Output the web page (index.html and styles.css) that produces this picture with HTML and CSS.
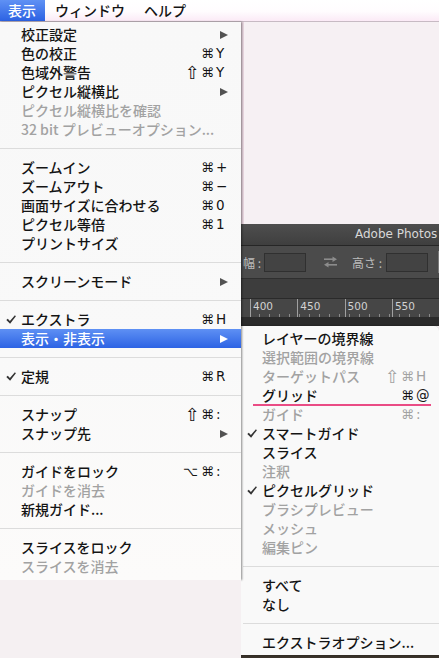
FILE: index.html
```html
<!DOCTYPE html>
<html lang="ja">
<head>
<meta charset="utf-8">
<title>表示メニュー</title>
<link rel="stylesheet" href="styles.css">
</head>
<body>
<div class="menubar">
  <span class="mb-item active">表示</span>
  <span class="mb-item">ウィンドウ</span>
  <span class="mb-item">ヘルプ</span>
</div>
<div class="stage">
  <div class="leftcol">
    <div class="menu main">
      <div class="item"><span class="chk"></span><span class="label">校正設定</span><span class="arrow"></span></div>
      <div class="item"><span class="chk"></span><span class="label">色の校正</span><span class="sc"><span class="mod">⌘</span><span class="key">Y</span></span></div>
      <div class="item"><span class="chk"></span><span class="label">色域外警告</span><span class="sc"><span class="mod"><span class="shift">⇧</span>⌘</span><span class="key">Y</span></span></div>
      <div class="item"><span class="chk"></span><span class="label">ピクセル縦横比</span><span class="arrow"></span></div>
      <div class="item off"><span class="chk"></span><span class="label">ピクセル縦横比を確認</span></div>
      <div class="item off"><span class="chk"></span><span class="label">32 bit プレビューオプション...</span></div>
      <div class="sep"></div>
      <div class="item"><span class="chk"></span><span class="label">ズームイン</span><span class="sc"><span class="mod">⌘</span><span class="key">+</span></span></div>
      <div class="item"><span class="chk"></span><span class="label">ズームアウト</span><span class="sc"><span class="mod">⌘</span><span class="key">−</span></span></div>
      <div class="item"><span class="chk"></span><span class="label">画面サイズに合わせる</span><span class="sc"><span class="mod">⌘</span><span class="key">0</span></span></div>
      <div class="item"><span class="chk"></span><span class="label">ピクセル等倍</span><span class="sc"><span class="mod">⌘</span><span class="key">1</span></span></div>
      <div class="item"><span class="chk"></span><span class="label">プリントサイズ</span></div>
      <div class="sep"></div>
      <div class="item"><span class="chk"></span><span class="label">スクリーンモード</span><span class="arrow"></span></div>
      <div class="sep"></div>
      <div class="item"><span class="chk"><svg class="tick" viewBox="0 0 10 9"><path d="M0.3 4.9 L1.8 3.7 L3.9 5.9 L8.9 0.3 L9.9 1.2 L4.1 8.7 Z"/></svg></span><span class="label">エクストラ</span><span class="sc"><span class="mod">⌘</span><span class="key">H</span></span></div>
      <div class="item hl"><span class="chk"></span><span class="label">表示・非表示</span><span class="arrow"></span></div>
      <div class="sep"></div>
      <div class="item"><span class="chk"><svg class="tick" viewBox="0 0 10 9"><path d="M0.3 4.9 L1.8 3.7 L3.9 5.9 L8.9 0.3 L9.9 1.2 L4.1 8.7 Z"/></svg></span><span class="label">定規</span><span class="sc"><span class="mod">⌘</span><span class="key">R</span></span></div>
      <div class="sep"></div>
      <div class="item"><span class="chk"></span><span class="label">スナップ</span><span class="sc"><span class="mod"><span class="shift">⇧</span>⌘</span><span class="key">:</span></span></div>
      <div class="item"><span class="chk"></span><span class="label">スナップ先</span><span class="arrow"></span></div>
      <div class="sep"></div>
      <div class="item"><span class="chk"></span><span class="label">ガイドをロック</span><span class="sc"><span class="mod">⌥⌘</span><span class="key">:</span></span></div>
      <div class="item off"><span class="chk"></span><span class="label">ガイドを消去</span></div>
      <div class="item"><span class="chk"></span><span class="label">新規ガイド...</span></div>
      <div class="sep"></div>
      <div class="item"><span class="chk"></span><span class="label">スライスをロック</span></div>
      <div class="item off"><span class="chk"></span><span class="label">スライスを消去</span></div>
    </div>
    <div class="fill"></div>
  </div>
  <div class="rightcol">
    <div class="desk"></div>
    <div class="pswin">
      <div class="ps-title">Adobe Photos</div>
      <div class="ps-opts">
        <span class="ps-label first">幅 :</span>
        <span class="ps-input"></span>
        <svg class="swap" viewBox="0 0 15 12"><path d="M1 3.2 H10" /><path d="M14 8.8 H5" /><polygon points="9.5,0.5 14,3.2 9.5,5.9" /><polygon points="5.5,6.1 1,8.8 5.5,11.5" /></svg>
        <span class="ps-label">高さ :</span>
        <span class="ps-input"></span>
        <span class="ps-divider"></span>
      </div>
      <div class="ps-gap"></div>
      <div class="ps-ruler">
        <span class="rcell">400</span>
        <span class="rcell">450</span>
        <span class="rcell">500</span>
        <span class="rcell">550</span>
      </div>
      <div class="ps-canvas"></div>
    </div>
    <div class="menu sub">
      <div class="item"><span class="chk"></span><span class="label">レイヤーの境界線</span></div>
      <div class="item off"><span class="chk"></span><span class="label">選択範囲の境界線</span></div>
      <div class="item off"><span class="chk"></span><span class="label">ターゲットパス</span><span class="sc"><span class="mod"><span class="shift">⇧</span>⌘</span><span class="key">H</span></span></div>
      <div class="item"><span class="chk"></span><span class="label">グリッド</span><span class="sc"><span class="mod">⌘</span><span class="key">@</span></span></div>
      <div class="item off"><span class="chk"></span><span class="label">ガイド</span><span class="sc"><span class="mod">⌘</span><span class="key">:</span></span></div>
      <div class="item"><span class="chk"><svg class="tick" viewBox="0 0 10 9"><path d="M0.3 4.9 L1.8 3.7 L3.9 5.9 L8.9 0.3 L9.9 1.2 L4.1 8.7 Z"/></svg></span><span class="label">スマートガイド</span></div>
      <div class="item"><span class="chk"></span><span class="label">スライス</span></div>
      <div class="item off"><span class="chk"></span><span class="label">注釈</span></div>
      <div class="item"><span class="chk"><svg class="tick" viewBox="0 0 10 9"><path d="M0.3 4.9 L1.8 3.7 L3.9 5.9 L8.9 0.3 L9.9 1.2 L4.1 8.7 Z"/></svg></span><span class="label">ピクセルグリッド</span></div>
      <div class="item off"><span class="chk"></span><span class="label">ブラシプレビュー</span></div>
      <div class="item off"><span class="chk"></span><span class="label">メッシュ</span></div>
      <div class="item off"><span class="chk"></span><span class="label">編集ピン</span></div>
      <div class="sep"></div>
      <div class="item"><span class="chk"></span><span class="label">すべて</span></div>
      <div class="item"><span class="chk"></span><span class="label">なし</span></div>
      <div class="sep"></div>
      <div class="item"><span class="chk"></span><span class="label">エクストラオプション...</span></div>
      <div class="mark"></div>
    </div>
    <div class="under"></div>
  </div>
</div>
</body>
</html>
```
FILE: styles.css
```css
html, body {
  margin: 0;
  padding: 0;
}
body {
  width: 439px;
  height: 658px;
  overflow: hidden;
  background: #f5f0f2;
  font-family: "Noto Sans CJK JP", "Noto Sans", sans-serif;
}

/* top menu bar */
.menubar {
  height: 21px;
  display: flex;
  background: linear-gradient(#ffffff 0%, #fffcfe 55%, #fbeaf6 100%);
  border-bottom: 1px solid #c7bac3;
}
.mb-item {
  padding: 0 9px 0 10px;
  font-size: 14px;
  font-weight: 500;
  line-height: 21px;
  color: #141414;
  white-space: nowrap;
}
.mb-item.active {
  padding: 0 9px 0 8px;
  color: #ffffff;
  background: linear-gradient(#5f91f4, #2c62e3);
}

/* layout */
.stage {
  display: flex;
  height: 636px;
}
.leftcol {
  width: 241px;
  flex: none;
  display: flex;
  flex-direction: column;
  position: relative;
  z-index: 3;
}
.rightcol {
  flex: 1;
  display: flex;
  flex-direction: column;
  min-width: 0;
}
.fill {
  flex: 1;
  background: #f5f0f2;
}
.desk {
  height: 202px;
  flex: none;
  background: #f6f0f3;
  box-shadow: inset 3px 0 0 #ecd9e3;
}
.under {
  flex: 1;
  background: #3a332b;
}

/* menus */
.menu {
  box-sizing: border-box;
}
.menu.main {
  padding: 3px 0 4px;
  background: linear-gradient(#f8f8f8 0%, #f9f9f9 60%, #fcfbfa 100%);
  box-shadow: 1px 0 2px rgba(0, 0, 0, 0.45);
}
.menu.sub {
  height: 329px;
  flex: none;
  padding: 3px 0;
  background: #f9f9f9;
  border-top-right-radius: 5px;
  box-shadow: -1px 0 2px rgba(0, 0, 0, 0.45);
  position: relative;
  z-index: 2;
}
.item {
  height: 19px;
  display: flex;
  align-items: center;
  font-size: 14px;
  font-weight: 500;
  color: #141414;
  padding-right: 13px;
  white-space: nowrap;
}
.menu.sub .item {
  padding-right: 11px;
}
.item.off {
  color: #a2a2a2;
}
.item.hl {
  color: #ffffff;
  background: linear-gradient(#5e90f4, #2d63e4);
}
.chk {
  width: 15px;
  padding-left: 6px;
  flex: none;
  display: flex;
  align-items: center;
}
.tick {
  width: 10px;
  height: 9px;
  fill: #333333;
}
.label {
  flex: 1;
  line-height: 19px;
}
.sc {
  display: flex;
  align-items: center;
  font-family: "DejaVu Sans", sans-serif;
  font-size: 13px;
  font-weight: normal;
  line-height: 19px;
}
.mod {
  display: flex;
  align-items: center;
  letter-spacing: 3px;
  margin-right: -1px;
}
.shift {
  font-size: 18px;
  line-height: 19px;
  letter-spacing: 1px;
}
.key {
  width: 12px;
  text-align: left;
  font-size: 13.5px;
}
.arrow {
  width: 0;
  height: 0;
  border-top: 4.5px solid transparent;
  border-bottom: 4.5px solid transparent;
  border-left: 8px solid #525252;
}
.item.hl .arrow {
  border-left-color: #ffffff;
}
.sep {
  height: 19px;
  display: flex;
  align-items: center;
}
.sep::after {
  content: "";
  flex: 1;
  height: 1px;
  background: #dcdcdc;
}
.menu.sub .sep::after {
  margin-left: 2px;
}

/* annotation line under グリッド */
.mark {
  position: absolute;
  left: 12px;
  top: 78px;
  width: 178px;
  height: 2px;
  background: #ea4c85;
}

/* photoshop window behind */
.pswin {
  height: 102px;
  flex: none;
  display: flex;
  flex-direction: column;
  background: #2a2a2a;
  overflow: hidden;
}
.ps-title {
  height: 21px;
  flex: none;
  background: linear-gradient(#4e4e4e, #3f3f3f);
  border-bottom: 1px solid #262626;
  color: #d8d8d8;
  font-family: "DejaVu Sans", sans-serif;
  font-size: 12px;
  line-height: 21px;
  padding-left: 114px;
  white-space: nowrap;
}
.ps-opts {
  height: 32px;
  flex: none;
  display: flex;
  align-items: center;
  background: #4b4b4b;
  border-bottom: 1px solid #2f2f2f;
  color: #bcbcbc;
  font-size: 12px;
  white-space: nowrap;
}
.ps-label {
  margin: 0 4px 0 14px;
}
.ps-label.first {
  margin-left: 2px;
  margin-right: 3px;
}
.ps-input {
  width: 42px;
  height: 19px;
  box-sizing: border-box;
  background: #434343;
  border: 1px solid #303030;
  flex: none;
}
.swap {
  width: 15px;
  height: 12px;
  margin-left: 17px;
  flex: none;
  fill: #8c8c8c;
  stroke: #8c8c8c;
  stroke-width: 1.6;
}
.swap polygon {
  stroke: none;
}
.ps-divider {
  width: 1px;
  height: 22px;
  background: #7a7a7a;
  margin-left: 10px;
}
.ps-gap {
  height: 19px;
  flex: none;
  background: #3d3d3d;
  border-bottom: 1px solid #2a2a2a;
}
.ps-ruler {
  height: 18px;
  flex: none;
  display: flex;
  padding-left: 9px;
  background-color: #464646;
  background-image: repeating-linear-gradient(to right, transparent 0, transparent 9px, #8a8a8a 9px, #8a8a8a 10px, transparent 10px, transparent 9.47px);
  background-size: 100% 3px;
  background-repeat: no-repeat;
  background-position: 9px 100%;
}
.rcell {
  width: 47.3px;
  flex: none;
  box-sizing: border-box;
  border-left: 1px solid #a0a0a0;
  padding-left: 2px;
  font-family: "DejaVu Sans", sans-serif;
  font-size: 10.5px;
  line-height: 15px;
  color: #d2d2d2;
}
.ps-canvas {
  flex: 1;
  background: #2b2b2b;
}
```
